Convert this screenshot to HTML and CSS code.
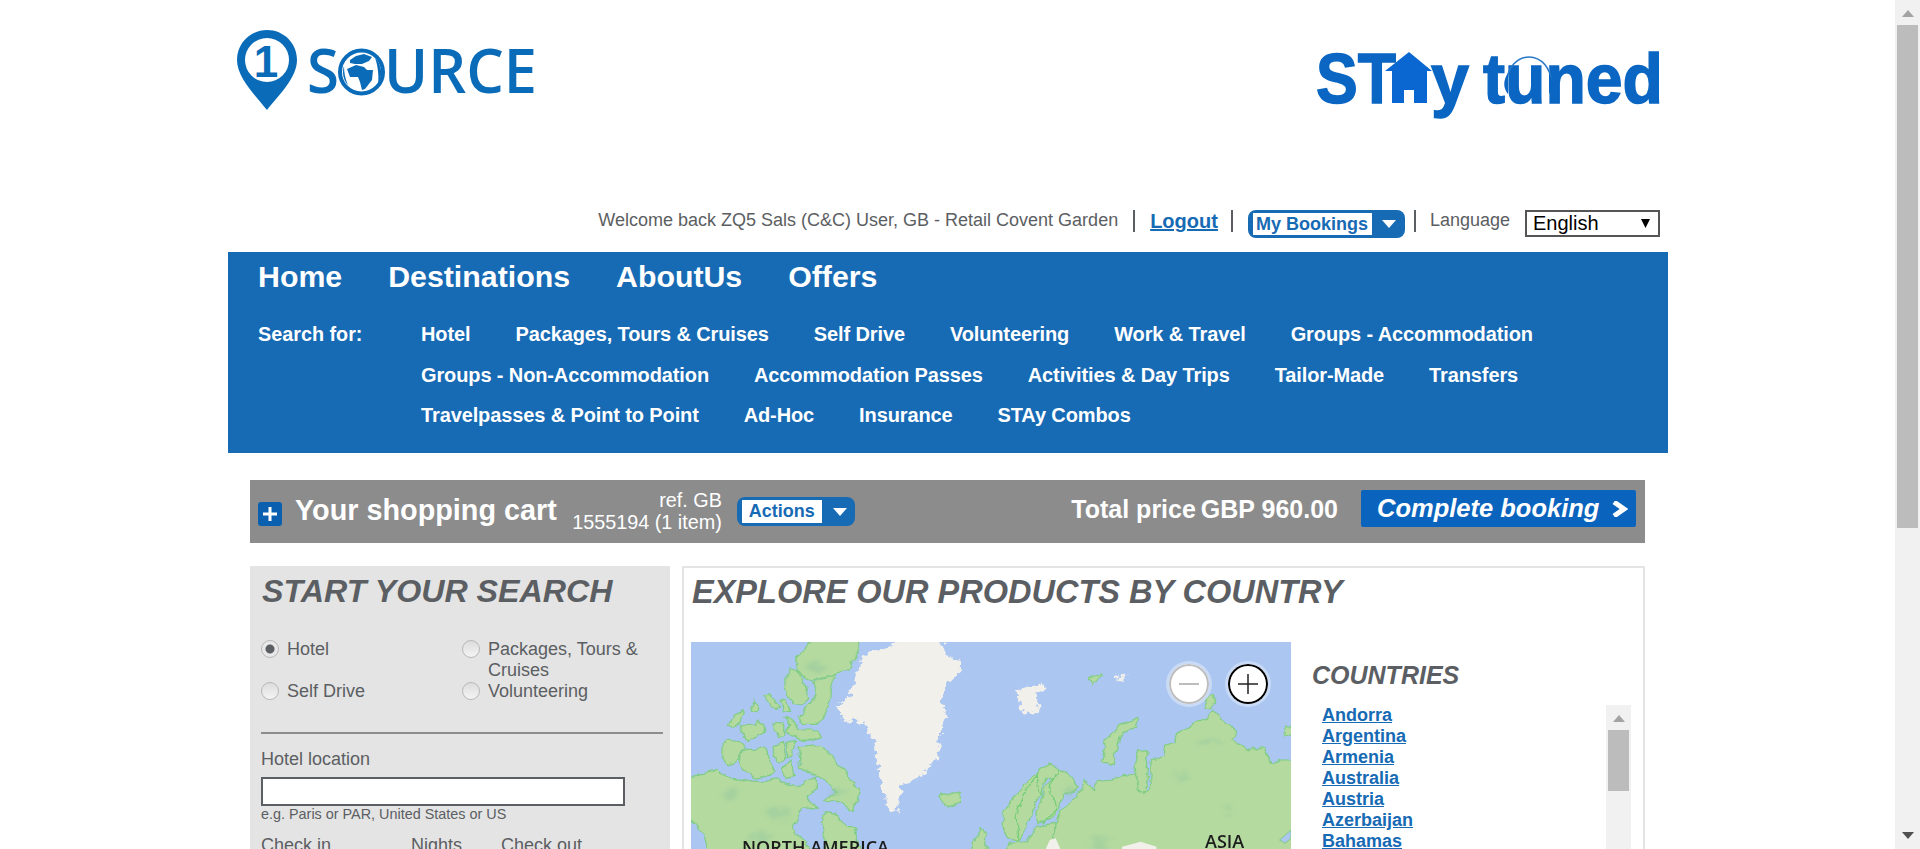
FILE: index.html
```html
<!DOCTYPE html>
<html lang="en">
<head>
<meta charset="utf-8">
<title>1Source - Stay Tuned</title>
<link rel="stylesheet" href="styles.css">
</head>
<body>
<div class="page">
  <header class="logos">
    <svg class="logo-source" viewBox="0 0 310 90" width="310" height="90" role="img" aria-label="1 Source">
      <path class="logo-fill" d="M31 0C14 0 1 13.500 1 30C1 48 20 66 31 80C42 66 61 48 61 30C61 13.500 48 0 31 0Z"/>
      <circle cx="31" cy="30" r="22" fill="#fff"/>
      <text class="logo-one" x="30" y="47" text-anchor="middle">1</text>
      <text class="logo-word" x="71" y="63" textLength="32" lengthAdjust="spacingAndGlyphs">S</text>
      <circle cx="125.500" cy="42" r="21.500" fill="#fff" stroke="#0a6cb8" stroke-width="4"/>
      <path class="logo-fill" d="M114 30L120 26L128 24L136 27L133 31L126 34L119 34L114 33ZM111 39L120 35L128 37L131 40L137 40L136 50L129 59L126 60L124 52L122 47L114 47Z"/>
      <path class="logo-fill" d="M139 28C146 34 147 46 142 55C143 46 142 36 139 28ZM108 36C106 42 107 50 112 55C109 49 108 42 108 36Z"/>
      <text class="logo-word" x="148" y="63" textLength="153" lengthAdjust="spacingAndGlyphs">URCE</text>
    </svg>
    <svg class="logo-stay" viewBox="0 0 352 72" width="352" height="72" role="img" aria-label="STAy tuned">
      <text class="stay-word" x="0" y="51" textLength="80" lengthAdjust="spacingAndGlyphs">ST</text>
      <path fill="#0a66d0" d="M69 19L93 0L116 19L111 19L111 51L98 51L98 38L88 38L88 51L76 51L76 19Z"/>
      <text class="stay-word" x="115" y="51" textLength="38" lengthAdjust="spacingAndGlyphs">y</text>
      <text class="stay-word" x="167" y="51" textLength="180" lengthAdjust="spacingAndGlyphs">tuned</text>
      <path d="M191 30A22 25 0 0 1 235 30" fill="none" stroke="#2a78c8" stroke-width="1.500"/>
      <path d="M192 21C187 28 187 36 192 42ZM233 21C237 28 237 36 233 42Z" fill="#0a66c2"/>
    </svg>
  </header>

  <div class="userbar">
    <span class="welcome">Welcome back ZQ5 Sals (C&amp;C) User, GB - Retail Covent Garden</span>
    <span class="sep"></span>
    <a class="logout" href="#">Logout</a>
    <span class="sep sep-tight"></span>
    <span class="split-btn bookings"><span class="split-label">My Bookings</span><svg class="tri" viewBox="0 0 14 8" width="14" height="8"><path d="M0 0H14L7 8Z"/></svg></span>
    <span class="sep sep-after"></span>
    <span class="lang">Language</span>
    <span class="select"><span>English</span><svg viewBox="0 0 9 9" width="9" height="9"><path d="M0 0H9L4.500 9Z"/></svg></span>
  </div>

  <nav class="nav">
    <div class="nav-main">
      <a href="#">Home</a><a href="#">Destinations</a><a href="#">AboutUs</a><a href="#">Offers</a>
    </div>
    <div class="nav-search">
      <span class="search-label">Search for:</span>
      <div class="search-links">
        <a href="#">Hotel</a><a href="#">Packages, Tours &amp; Cruises</a><a href="#">Self Drive</a><a href="#">Volunteering</a><a href="#">Work &amp; Travel</a><a href="#">Groups - Accommodation</a><a href="#">Groups - Non-Accommodation</a><a href="#">Accommodation Passes</a><a href="#">Activities &amp; Day Trips</a><a href="#">Tailor-Made</a><a href="#">Transfers</a><a href="#">Travelpasses &amp; Point to Point</a><a href="#">Ad-Hoc</a><a href="#">Insurance</a><a href="#">STAy Combos</a>
      </div>
    </div>
  </nav>

  <section class="cart">
    <span class="cart-plus"><svg viewBox="0 0 14 14" width="14" height="14"><path d="M7 0V14M0 7H14" stroke="#fff" stroke-width="3"/></svg></span>
    <span class="cart-title">Your shopping cart</span>
    <span class="cart-ref">ref. GB<br>1555194 (1 item)</span>
    <span class="split-btn actions"><span class="split-label">Actions</span><svg class="tri" viewBox="0 0 14 8" width="14" height="8"><path d="M0 0H14L7 8Z"/></svg></span>
    <span class="cart-total"><span>Total price</span><span>GBP 960.00</span></span>
    <a class="complete" href="#"><span>Complete booking</span><svg viewBox="0 0 17 16" width="17" height="16"><path d="M3 1L13 8L3 15" fill="none" stroke="#fff" stroke-width="5"/></svg></a>
  </section>

  <main class="columns">
    <aside class="search-panel">
      <h2 class="panel-title">START YOUR SEARCH</h2>
      <div class="radios">
        <label class="radio"><input type="radio" name="kind" checked><span>Hotel</span></label>
        <label class="radio"><input type="radio" name="kind"><span>Packages, Tours &amp; Cruises</span></label>
        <label class="radio"><input type="radio" name="kind"><span>Self Drive</span></label>
        <label class="radio"><input type="radio" name="kind"><span>Volunteering</span></label>
      </div>
      <hr class="rule">
      <label class="field-label" for="loc">Hotel location</label>
      <input class="text-input" id="loc" type="text">
      <p class="hint">e.g. Paris or PAR, United States or US</p>
      <div class="dates"><span>Check in</span><span>Nights</span><span>Check out</span></div>
    </aside>

    <section class="explore">
      <h2 class="explore-title">EXPLORE OUR PRODUCTS BY COUNTRY</h2>
      <div class="explore-body">
        <div class="map">
          <svg class="map-art" viewBox="28 246 1517 621" preserveAspectRatio="none">
            <defs>
              <filter id="coast" x="-3%" y="-3%" width="106%" height="106%">
                <feTurbulence type="fractalNoise" baseFrequency="0.03" numOctaves="3" seed="7" result="n"/>
                <feDisplacementMap in="SourceGraphic" in2="n" scale="22" xChannelSelector="R" yChannelSelector="G"/>
                <feGaussianBlur stdDeviation="0.8"/>
              </filter>
              <filter id="ice" x="-5%" y="-5%" width="110%" height="110%">
                <feTurbulence type="fractalNoise" baseFrequency="0.06" numOctaves="3" seed="3" result="n"/>
                <feDisplacementMap in="SourceGraphic" in2="n" scale="30" xChannelSelector="R" yChannelSelector="G"/>
                <feGaussianBlur stdDeviation="1.800"/>
              </filter>
              <filter id="patch" x="-30%" y="-30%" width="160%" height="160%">
                <feTurbulence type="fractalNoise" baseFrequency="0.05" numOctaves="3" seed="11" result="n"/>
                <feDisplacementMap in="SourceGraphic" in2="n" scale="50" xChannelSelector="R" yChannelSelector="G"/>
                <feGaussianBlur stdDeviation="5"/>
              </filter>
            </defs>
            <rect x="28" y="246" width="1517" height="621" fill="#abc6f0"/>
            <g class="land" filter="url(#coast)">
              <path d="M340 225L452 225L456 268L432 310L425 330L390 345L335 360L300 340L292 300L322 270Z"/>
              <path d="M275 330L300 335L320 375L325 420L310 436L285 430L268 390L265 360Z"/>
              <path d="M335 365L395 345L380 390L378 440L355 490L305 490L300 470L330 430L345 400Z"/>
              <path d="M215 410L225 400L250 430L245 448L228 440Z"/>
              <path d="M255 415L268 420L280 458L262 455Z"/>
              <path d="M178 440L190 420L195 435L192 458L176 455Z"/>
              <path d="M125 495L140 465L160 455L155 485L135 505Z"/>
              <path d="M150 500L170 490L192 497L200 480L215 515L190 530L170 540L155 520Z"/>
              <path d="M235 490L260 485L260 525L245 530Z"/>
              <path d="M265 470L290 490L300 510L350 510L358 530L320 545L285 530L262 510L280 500Z"/>
              <path d="M110 540L150 545L165 565L145 600L120 615L108 590Z"/>
              <path d="M150 595L170 565L215 565L240 640L195 655L160 630Z"/>
              <path d="M235 560L265 550L265 605L245 605Z"/>
              <path d="M270 550L295 545L285 590L270 590Z"/>
              <path d="M300 560L340 555L375 570L390 600L420 640L452 690L438 755L405 725L365 720L395 700L370 660L335 640L305 625Z"/>
              <path d="M255 630L285 600L290 650L265 655Z"/>
              <path d="M5 650L60 640L90 630L130 655L200 665L240 660L300 680L320 660L345 650L345 690L320 710L345 745L315 740L295 775L285 810L320 850L345 890L75 890L60 820L28 782L5 770Z"/>
              <path d="M365 755L395 760L420 800L440 800L462 890L370 890L360 800Z"/>
              <path d="M658 700L685 705L710 692L712 725L680 740L660 725Z"/>
              <path d="M1030 350L1065 345L1045 375Z"/>
              <path d="M1155 475L1158 495L1110 530L1095 620L1065 610L1075 550L1110 500Z"/>
              <path d="M1325 440L1345 405L1357 430L1345 445Z"/>
              <path d="M1530 500L1570 495L1570 535L1530 525Z"/>
              <path d="M1570 600L1520 600L1495 610L1480 570L1450 560L1435 570L1400 540L1405 510L1375 480L1348 452L1335 475L1300 490L1255 525L1250 550L1220 560L1225 585L1195 600L1188 650L1190 690L1170 700L1150 645L1115 640L1085 660L1055 665L1040 690L1025 660L1018 690L985 725L960 760L945 800L935 890L1570 890Z"/>
              <path d="M1160 575L1180 572L1185 610L1180 670L1182 695L1165 695L1150 650L1148 610Z"/>
              <path d="M935 612L955 625L945 650L925 660L915 705L900 725L885 770L880 800L855 845L830 835L815 800L815 765L850 700L890 650Z"/>
              <path d="M955 625L985 650L1008 680L1000 695L965 705L960 745L940 775L905 790L900 760L915 730L925 680L945 650Z"/>
              <path d="M900 800L945 790L945 890L810 890L830 850L880 845Z"/>
              <path d="M762 805L775 825L770 850L790 890L735 890L745 845Z"/>
            </g>
            <g class="border" filter="url(#coast)">
              <path d="M900 645L870 700L850 770L855 845"/>
              <path d="M900 645L915 700"/>
              <path d="M945 640L935 700L955 745L920 790"/>
            </g>
            <path class="sea" d="M1545 810L1516 840L1530 850L1545 835Z"/>
            <g class="snow" filter="url(#ice)">
              <path d="M460 290L500 270L530 262L560 230L660 230L672 280L710 310L705 335L675 370L662 420L672 470L655 530L650 600L605 650L560 680L550 755L528 762L512 690L490 550L468 485L415 485L402 435L428 410L445 350Z"/>
              <path d="M855 390L885 378L920 368L925 385L897 400L910 450L872 465L855 420Z"/>
              <path d="M1096 345L1112 340L1108 352L1098 358Z"/>
              <path d="M1112 352L1130 340L1126 350L1110 368Z"/>
            </g>
            <g class="snow">
              <path d="M935 840L950 835L962 867L925 867Z"/>
              <path d="M1118 860L1165 845L1205 860L1205 867L1118 867Z"/>
            </g>
            <g class="forest" filter="url(#patch)">
              <ellipse cx="130" cy="700" rx="22" ry="16"/>
              <ellipse cx="250" cy="760" rx="32" ry="20"/>
              <ellipse cx="205" cy="835" rx="28" ry="16"/>
              <ellipse cx="400" cy="700" rx="14" ry="18"/>
              <ellipse cx="340" cy="320" rx="22" ry="14"/>
              <ellipse cx="1385" cy="745" rx="10" ry="14"/>
              <ellipse cx="1340" cy="540" rx="20" ry="10"/>
              <ellipse cx="1270" cy="650" rx="14" ry="18"/>
              <ellipse cx="1060" cy="850" rx="24" ry="18"/>
              <ellipse cx="985" cy="700" rx="10" ry="14"/>
            </g>
          </svg>
          <span class="map-label na">NORTH AMERICA</span>
          <span class="map-label asia">ASIA</span>
          <div class="zoom-controls">
            <span class="zoom-btn off"><svg viewBox="0 0 20 20" width="20" height="20"><path d="M0 10H20"/></svg></span>
            <span class="zoom-btn"><svg viewBox="0 0 20 20" width="20" height="20"><path d="M0 10H20M10 0V20"/></svg></span>
          </div>
        </div>
        <div class="countries">
          <h3 class="countries-title">COUNTRIES</h3>
          <div class="country-box">
            <ul class="country-list">
              <li><a href="#">Andorra</a></li>
              <li><a href="#">Argentina</a></li>
              <li><a href="#">Armenia</a></li>
              <li><a href="#">Australia</a></li>
              <li><a href="#">Austria</a></li>
              <li><a href="#">Azerbaijan</a></li>
              <li><a href="#">Bahamas</a></li>
            </ul>
            <div class="list-scroll"><svg viewBox="0 0 12 7" width="12" height="7"><path d="M6 0L12 7H0Z"/></svg><span class="list-thumb"></span></div>
          </div>
        </div>
      </div>
    </section>
  </main>
</div>
<div class="page-scroll">
  <svg viewBox="0 0 12 7" width="12" height="7"><path d="M6 0L12 7H0Z"/></svg>
  <span class="page-thumb"></span>
  <svg class="down" viewBox="0 0 12 7" width="12" height="7"><path d="M0 0H12L6 7Z"/></svg>
</div>
</body>
</html>
```

FILE: styles.css
```css
* { box-sizing: border-box; }
html, body { margin: 0; height: 100%; overflow: hidden; background: #fff; }
body { padding-right: 24px; font-family: "Liberation Sans", Arial, sans-serif; color: #5b5e62; }
a { color: #176ab4; }
h2, h3, p, ul { margin: 0; padding: 0; }

.page { width: 1440px; height: 100%; margin: 0 auto; overflow: hidden; }

.logos { display: flex; justify-content: space-between; align-items: flex-start; height: 210px; padding: 30px 0 0 8px; }
.logo-source { display: block; overflow: visible; }
.logo-stay { display: block; margin: 22px 0 0; overflow: visible; }
.logo-fill { fill: #0a6cb8; }
.logo-one { font: 700 44px "Liberation Sans", sans-serif; fill: #0a6cb8; }
.logo-word { font: 600 62px "Open Sans", sans-serif; fill: #0a6cb8; }
.stay-word { font: 700 71px "Liberation Sans", sans-serif; fill: #0a66c2; stroke: #0a66c2; stroke-width: 1.500; }

.userbar { display: flex; align-items: flex-start; justify-content: flex-end; height: 42px; padding-right: 8px; font-size: 18px; }
.welcome { line-height: 21px; }
.sep { width: 2px; height: 22px; margin: 0 15px; background: #5b5e62; }
.sep-tight { margin: 0 15px 0 13px; }
.sep-after { margin: 0 14px 0 9px; }
.logout { font-size: 20px; font-weight: 700; line-height: 22px; }
.lang { line-height: 21px; }
.split-btn { display: inline-flex; align-items: center; background: #176ab4; border-radius: 8px; padding: 3px 0 3px 5px; }
.split-label { display: block; background: #fff; color: #176ab4; font-weight: 700; }
.tri { fill: #fff; display: block; flex: none; }
.bookings { flex: none; width: 157px; height: 28px; }
.bookings .split-label { width: 119px; height: 22px; font-size: 18px; line-height: 22px; padding-left: 3px; white-space: nowrap; }
.bookings .tri { margin-left: 10px; }
.select { display: flex; align-items: center; justify-content: space-between; width: 135px; height: 27px; margin-left: 15px; padding: 0 8px 0 6px; border: 2px solid #555; color: #000; font-size: 20px; background: #fff; }
.select svg { fill: #000; }

.nav { height: 201px; background: #176ab4; padding: 0 0 0 30px; color: #fff; }
.nav a { color: #fff; text-decoration: none; font-weight: 700; }
.nav-main { display: flex; gap: 46px; height: 62px; padding-top: 7px; }
.nav-main a { font-size: 30.300px; line-height: 36px; }
.nav-search { display: flex; }
.search-label { width: 163px; font-size: 19.800px; font-weight: 700; line-height: 40.500px; }
.search-links { display: flex; flex-wrap: wrap; column-gap: 45px; width: 1230px; }
.search-links a { font-size: 20px; letter-spacing: -.12px; line-height: 40.500px; }

.cart { display: flex; align-items: center; height: 63px; margin: 27px 23px 0 22px; padding: 0 9px 0 8px; background: #8c8c8c; color: #fff; }
.cart-plus { display: flex; align-items: center; justify-content: center; width: 24px; height: 24px; background: #0a5fae; border-radius: 3px; margin-top: 5px; }
.cart-title { margin-left: 13px; margin-top: -2px; font-size: 28.800px; font-weight: 700; }
.cart-ref { width: 165px; text-align: right; font-size: 19.800px; line-height: 22px; margin-top: -2px; }
.actions { flex: none; width: 118px; height: 29px; margin-left: 15px; margin-top: 0; }
.actions .split-label { width: 80px; height: 23px; font-size: 18px; line-height: 23px; text-align: center; }
.actions .tri { margin-left: 11px; }
.cart-total { display: flex; gap: 5px; margin-left: auto; font-size: 25px; font-weight: 700; margin-top: -5px; }
.complete { display: flex; align-items: center; justify-content: space-between; flex: none; width: 275px; height: 37px; margin-left: 23px; padding: 0 8px 0 16px; margin-top: -6px; background: #0a64bd; border-radius: 2px; color: #fff; font-size: 25.500px; font-style: italic; font-weight: 700; text-decoration: none; white-space: nowrap; }
.complete svg { flex: none; }

.columns { display: flex; gap: 12px; margin: 23px 23px 0 22px; align-items: flex-start; }
.search-panel { width: 420px; height: 283px; padding: 0 7px 0 11px; background: #e4e4e4; overflow: hidden; flex: none; }
.panel-title { font-size: 32.200px; font-style: italic; font-weight: 700; line-height: 50px; margin-left: 1px; }
.radios { display: grid; grid-template-columns: 201px 1fr; margin-top: 23px; font-size: 18px; line-height: 21px; }
.radio { display: flex; gap: 8px; align-items: flex-start; }
.radio input { appearance: none; flex: none; width: 18px; height: 18px; margin: 1px 0 0; border: 1px solid #b8b8b8; border-radius: 50%; background: linear-gradient(#dcdcdc, #f4f4f4); }
.radio input:checked { background: radial-gradient(circle, #5b5e62 0 4px, #e8e8e8 5px); }
.rule { height: 2px; margin: 30px 0 15px; border: 0; background: #8c8c8c; }
.field-label { display: block; font-size: 18px; line-height: 21px; }
.text-input { display: block; width: 364px; height: 29px; margin-top: 7px; border: 2px solid #5b5e62; background: #fff; border-radius: 0; }
.hint { font-size: 14.400px; line-height: 16px; }
.dates { display: flex; margin-top: 13px; font-size: 18px; line-height: 21px; }
.dates span:nth-child(1) { width: 150px; }
.dates span:nth-child(2) { width: 90px; }

.explore { flex: 1; height: 283px; border: 2px solid #e4e4e4; border-bottom: 0; padding: 0 0 0 7px; overflow: hidden; }
.explore-title { height: 74px; padding-left: 1px; font-size: 32.500px; font-style: italic; font-weight: 700; line-height: 48px; }
.explore-body { display: flex; }
.map { position: relative; flex: none; width: 600px; height: 207px; overflow: hidden; }
.map-art { display: block; width: 600px; height: 207px; }
.land path { fill: #b4da9f; stroke: #80cd85; stroke-width: 1.200; stroke-linejoin: round; vector-effect: non-scaling-stroke; }
.border path { fill: none; stroke: #72cd74; stroke-width: 1.200; vector-effect: non-scaling-stroke; }
.sea { fill: #abc6f0; stroke: #80cd85; vector-effect: non-scaling-stroke; }
.snow path { fill: #f2f0eb; }
.forest ellipse { fill: #8fc5a0; opacity: .4; }
.map-label { position: absolute; font: 600 18px/1 "Open Sans", sans-serif; color: #1c1c1c; white-space: nowrap; }
.na { left: 51px; top: 196px; }
.asia { left: 514px; top: 190px; }
.zoom-controls { position: absolute; top: 19px; left: 475px; display: flex; gap: 13px; }
.zoom-btn { display: flex; align-items: center; justify-content: center; width: 46px; height: 46px; border: 3px solid rgba(255,255,255,.35); border-radius: 50%; background: #fff; background-clip: padding-box; box-shadow: inset 0 0 0 2px #000; }
.zoom-btn svg { fill: none; stroke: #222; stroke-width: 1.500; }
.zoom-btn.off { box-shadow: inset 0 0 0 2px #bdbdbd; }
.zoom-btn.off svg { stroke: #bdbdbd; stroke-width: 2; }

.countries { flex: 1; padding-left: 21px; }
.countries-title { margin-top: 19px; font-size: 25px; font-style: italic; font-weight: 700; line-height: 28px; }
.country-box { display: flex; justify-content: space-between; margin-top: 16px; width: 319px; }
.country-list { list-style: none; padding-left: 10px; font-size: 18px; line-height: 21px; font-weight: 700; }
.list-scroll { display: flex; flex-direction: column; align-items: center; width: 25px; height: 144px; background: #f1f1f1; padding-top: 10px; }
.list-scroll svg { fill: #a3a3a3; display: block; }
.list-thumb { display: block; width: 21px; height: 61px; margin-top: 8px; background: #bcbcbc; }

.page-scroll { position: fixed; top: 0; right: 0; bottom: 0; display: flex; flex-direction: column; align-items: center; width: 25px; padding-top: 10px; background: #f1f1f1; }
.page-scroll svg { fill: #a3a3a3; display: block; flex: none; }
.page-scroll .down { margin-top: auto; margin-bottom: 10px; fill: #505050; }
.page-thumb { display: block; width: 21px; height: 503px; margin-top: 8px; background: #bcbcbc; }
```
